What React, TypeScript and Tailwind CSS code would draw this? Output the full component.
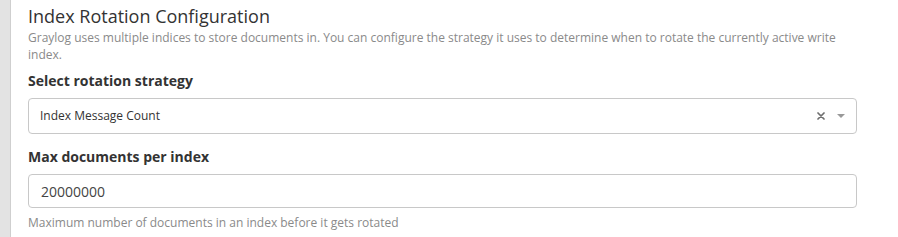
export default function App() {
  return (
    <div className="flex h-[237px] w-[898px] overflow-hidden bg-white font-['Open_Sans',sans-serif] text-[#333]">
      {/* left gutter */}
      <div className="w-[10px] shrink-0 bg-[#e3e3e3]" />
      <div className="w-px shrink-0 bg-[#cfcfcf]" />

      <div className="w-[846px] shrink-0 pl-[17px]">
        <h2 className="mt-[4px] text-[18px] leading-[25px] font-normal text-[#333]">
          Index Rotation Configuration
        </h2>
        <p className="text-[12px] leading-[17px] text-[#8a8a8a]">
          Graylog uses multiple indices to store documents in. You can configure the strategy it uses to determine when to
          rotate the currently active write index.
        </p>

        <label className="mt-[8px] block text-[14px] leading-[20px] font-bold text-[#333]">
          Select rotation strategy
        </label>
        <div className="mt-[7px] flex h-[36px] items-center rounded-[4px] border border-[#c8c8c8] bg-white pl-[11px] pr-[11px]">
          <span className="flex-1 text-[12px] text-[#333]">Index Message Count</span>
          <svg width="8" height="8" viewBox="0 0 8 8" className="mr-[12px]">
            <path d="M1 1 L7 7 M7 1 L1 7" stroke="#6f6f6f" strokeWidth="1.7" strokeLinecap="round" />
          </svg>
          <span className="h-0 w-0 border-x-[4px] border-t-[4px] border-x-transparent border-t-[#999]" />
        </div>

        <label className="mt-[13px] block text-[14px] leading-[20px] font-bold text-[#333]">
          Max documents per index
        </label>
        <div className="mt-[7px] flex h-[34px] items-center rounded-[4px] border border-[#c8c8c8] bg-white pl-[12px]">
          <span className="text-[14px] text-[#444]">20000000</span>
        </div>
        <p className="mt-[6px] text-[12px] leading-[17px] text-[#8a8a8a]">
          Maximum number of documents in an index before it gets rotated
        </p>
      </div>
    </div>
  );
}
